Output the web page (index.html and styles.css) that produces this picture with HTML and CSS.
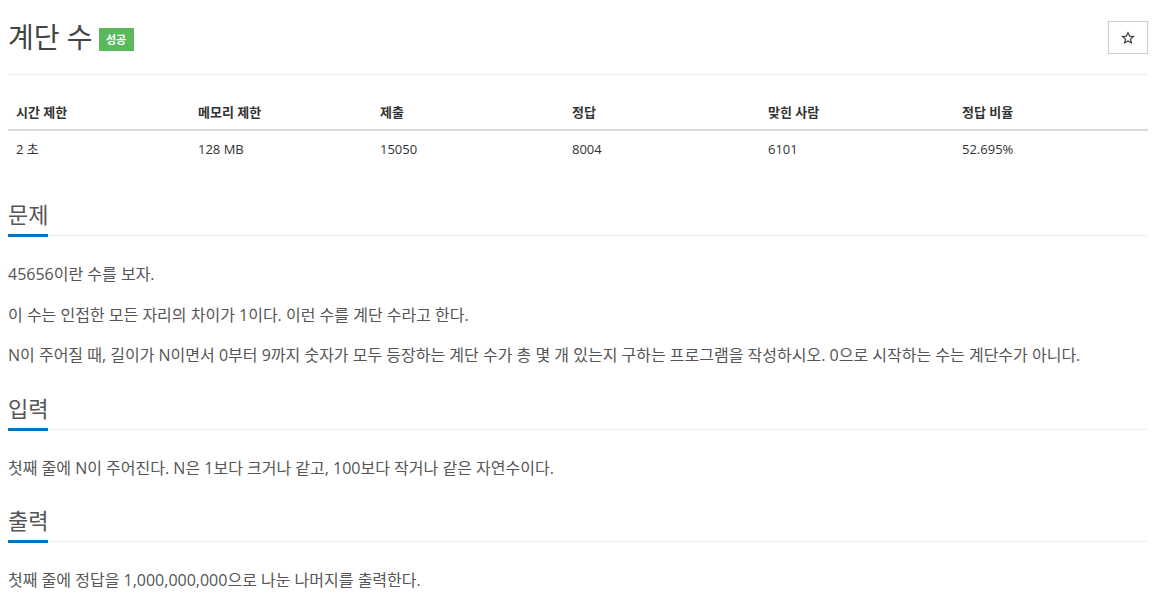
FILE: index.html
```html
<!DOCTYPE html>
<html lang="ko">
<head>
<meta charset="utf-8">
<title>계단 수</title>
<link rel="stylesheet" href="styles.css">
</head>
<body>
<div class="container">
<div class="page-header">
  <div class="title-wrap">
    <h1 class="title">계단 수</h1>
    <span class="badge">성공</span>
  </div>
  <button class="star-btn" type="button" aria-label="즐겨찾기">
    <svg width="14" height="14" viewBox="0 0 24 24"><path d="M12 2.8l2.75 6.1 6.55.6-4.95 4.4 1.45 6.5L12 17.05 6.2 20.4l1.45-6.5L2.7 9.5l6.55-.6z" fill="none" stroke="#333" stroke-width="2" stroke-linejoin="miter"/></svg>
  </button>
</div>

<table class="info">
  <thead>
    <tr>
      <th class="c1">시간 제한</th>
      <th class="c2">메모리 제한</th>
      <th class="c3">제출</th>
      <th class="c4">정답</th>
      <th class="c5">맞힌 사람</th>
      <th class="c6">정답 비율</th>
    </tr>
  </thead>
  <tbody>
    <tr>
      <td>2 초</td>
      <td>128 MB</td>
      <td>15050</td>
      <td>8004</td>
      <td>6101</td>
      <td>52.695%</td>
    </tr>
  </tbody>
</table>

<section class="sec sec-first">
  <div class="headline"><h2>문제</h2></div>
  <p>45656이란 수를 보자.</p>
  <p>이 수는 인접한 모든 자리의 차이가 1이다. 이런 수를 계단 수라고 한다.</p>
  <p>N이 주어질 때, 길이가 N이면서 0부터 9까지 숫자가 모두 등장하는 계단 수가 총 몇 개 있는지 구하는 프로그램을 작성하시오. 0으로 시작하는 수는 계단수가 아니다.</p>
</section>

<section class="sec">
  <div class="headline"><h2>입력</h2></div>
  <p>첫째 줄에 N이 주어진다. N은 1보다 크거나 같고, 100보다 작거나 같은 자연수이다.</p>
</section>

<section class="sec">
  <div class="headline"><h2>출력</h2></div>
  <p>첫째 줄에 정답을 1,000,000,000으로 나눈 나머지를 출력한다.</p>
</section>
</div>
</body>
</html>
```

FILE: styles.css
```css
html, body {
  background: #fff;
}
body {
  margin: 8px;
  font-family: "Open Sans", "Noto Sans CJK KR", sans-serif;
  color: #555;
  font-size: 14px;
}
.container {
  width: 1140px;
}
.page-header {
  display: flex;
  justify-content: space-between;
  align-items: flex-start;
  margin-top: 13px;
  padding-bottom: 20px;
  border-bottom: 1px solid #eee;
}
.title-wrap {
  display: flex;
  align-items: center;
  gap: 6px;
}
.title {
  margin: 0;
  font-size: 28px;
  font-weight: 400;
  line-height: 33px;
  color: #444;
}
.badge {
  display: inline-block;
  background: #5cb85c;
  color: #fff;
  font-size: 11px;
  font-weight: 700;
  line-height: 23px;
  height: 23px;
  width: 35px;
  text-align: center;
  margin-top: 4px;
}
.star-btn {
  width: 40px;
  height: 33px;
  padding: 0;
  border: 1px solid #ccc;
  background: #fff;
  display: flex;
  align-items: center;
  justify-content: center;
}
.info {
  width: 1140px;
  border-collapse: collapse;
  margin-top: 19px;
  table-layout: fixed;
  color: #333;
  font-size: 13px;
}
.info th, .info td {
  box-sizing: border-box;
  text-align: left;
  padding: 8px;
  line-height: 20px;
}
.info th {
  font-weight: 700;
  border-bottom: 2px solid #ddd;
  padding-bottom: 7px;
}
.info .c1 { width: 182px; }
.info .c2 { width: 182px; }
.info .c3 { width: 192px; }
.info .c4 { width: 196px; }
.info .c5 { width: 194px; }
.info .c6 { width: 194px; }
.sec-first {
  margin-top: 34px;
}
.sec + .sec {
  margin-top: 26px;
}
.headline {
  display: flex;
  border-bottom: 1px dotted #ddd;
  margin-bottom: 26px;
}
.headline h2 {
  margin: 0 0 -2px 0;
  font-size: 22px;
  font-weight: 400;
  line-height: 26px;
  padding-bottom: 7px;
  border-bottom: 3px solid #0076c0;
  color: #555;
}
.sec p {
  margin: 0 0 15px 0;
  font-size: 16px;
  line-height: 25.5px;
}
```
